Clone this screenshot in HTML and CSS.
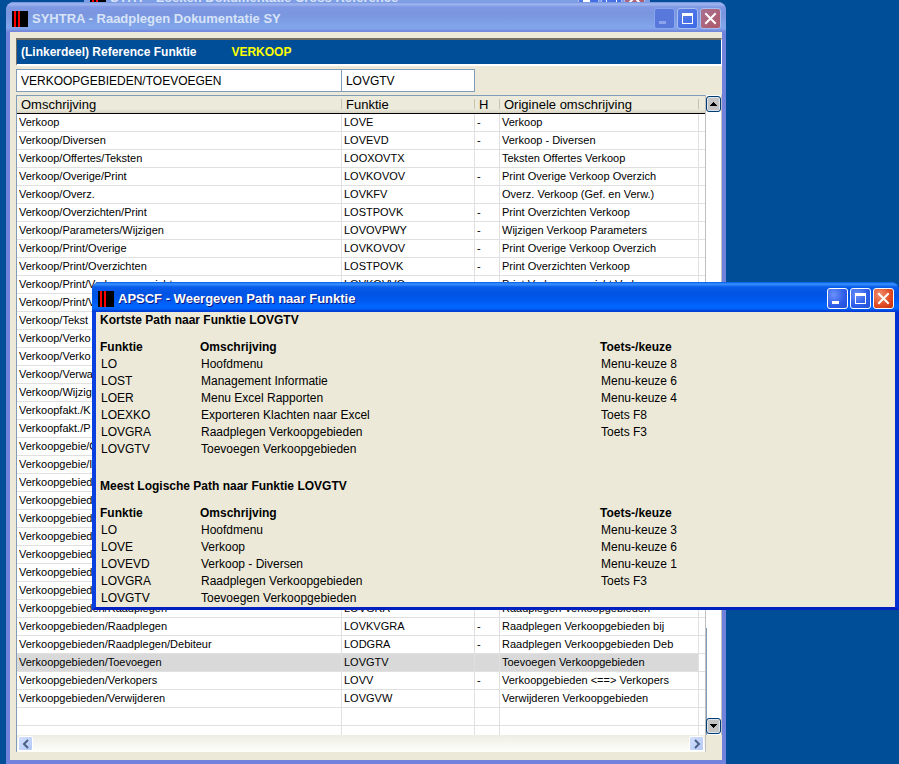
FILE: index.html
```html
<!DOCTYPE html>
<html lang="nl">
<head>
    <meta charset="UTF-8">
    <meta name="viewport" content="width=device-width, initial-scale=1.0">
    <title>SYHTRA - Raadplegen Dokumentatie SY</title>
    <link rel="stylesheet" href="styles.css">
</head>
<body>
<svg class="symbols" aria-hidden="true">
    <symbol id="app" viewBox="0 0 16 16"><path d="M0 0h16v16H0z"/><path d="M2 0h2v16H2zM6 0h2v16H6z" fill="#f00"/></symbol>
    <symbol id="min" viewBox="0 0 19 19"><path d="M4 12h7v3H4z"/></symbol>
    <symbol id="max" viewBox="0 0 19 19"><path d="M4 4h11v11H4zM5 7v7h9V7z" fill-rule="evenodd"/></symbol>
    <symbol id="close" viewBox="0 0 19 19"><path d="M5 5l9 9M14 5l-9 9" stroke="currentColor" stroke-width="2" stroke-linecap="square"/></symbol>
    <symbol id="up" viewBox="0 0 7 4"><path d="M3 0h1v1h1v1h1v1h1v1H0V3h1V2h1V1h1z"/></symbol>
    <symbol id="down" viewBox="0 0 7 4"><path d="M0 0h7v1H6v1H5v1H4v1H3V3H2V2H1V1H0z"/></symbol>
    <symbol id="left" viewBox="0 0 8 10"><path d="M6 1L2 5l4 4" fill="none" stroke="currentColor" stroke-width="2"/></symbol>
    <symbol id="right" viewBox="0 0 8 10"><path d="M2 1l4 4-4 4" fill="none" stroke="currentColor" stroke-width="2"/></symbol>
</svg>
<div class="desktop">
    <section class="window inactive back">
        <header class="titlebar">
            <svg class="app"><use href="#app"/></svg>
            <h2>SYHT - Zoeken Dokumentatie Cross Reference</h2>
            <button class="cap" aria-label="Minimaliseren"><svg><use href="#min"/></svg></button>
            <button class="cap" aria-label="Maximaliseren"><svg><use href="#max"/></svg></button>
            <button class="cap close" aria-label="Sluiten"><svg><use href="#close"/></svg></button>
        </header>
    </section>

    <main class="window inactive main">
        <header class="titlebar">
            <svg class="app"><use href="#app"/></svg>
            <h1>SYHTRA - Raadplegen Dokumentatie SY</h1>
            <button class="cap dim" aria-label="Minimaliseren"><svg><use href="#min"/></svg></button>
            <button class="cap" aria-label="Maximaliseren"><svg><use href="#max"/></svg></button>
            <button class="cap close" aria-label="Sluiten"><svg><use href="#close"/></svg></button>
        </header>
        <div class="content">
            <div class="banner"><span>(Linkerdeel) Reference Funktie</span><span class="key">VERKOOP</span></div>
            <form class="fields">
                <input class="desc" type="text" aria-label="Omschrijving" value="VERKOOPGEBIEDEN/TOEVOEGEN">
                <input class="func" type="text" aria-label="Funktie" value="LOVGTV">
            </form>
            <div class="grid">
                <div class="list">
                    <table class="rows">
                        <colgroup><col><col class="c-func"><col class="c-h"><col class="c-orig"><col class="c-end"></colgroup>
                        <thead>
                            <tr><th>Omschrijving</th><th>Funktie</th><th>H</th><th>Originele omschrijving</th><th></th></tr>
                        </thead>
                        <tbody>
                            <tr><td>Verkoop</td><td>LOVE</td><td>-</td><td>Verkoop</td><td></td></tr>
                            <tr><td>Verkoop/Diversen</td><td>LOVEVD</td><td>-</td><td>Verkoop - Diversen</td><td></td></tr>
                            <tr><td>Verkoop/Offertes/Teksten</td><td>LOOXOVTX</td><td></td><td>Teksten Offertes Verkoop</td><td></td></tr>
                            <tr><td>Verkoop/Overige/Print</td><td>LOVKOVOV</td><td>-</td><td>Print Overige Verkoop Overzich</td><td></td></tr>
                            <tr><td>Verkoop/Overz.</td><td>LOVKFV</td><td></td><td>Overz. Verkoop (Gef. en Verw.)</td><td></td></tr>
                            <tr><td>Verkoop/Overzichten/Print</td><td>LOSTPOVK</td><td>-</td><td>Print Overzichten Verkoop</td><td></td></tr>
                            <tr><td>Verkoop/Parameters/Wijzigen</td><td>LOVOVPWY</td><td>-</td><td>Wijzigen Verkoop Parameters</td><td></td></tr>
                            <tr><td>Verkoop/Print/Overige</td><td>LOVKOVOV</td><td>-</td><td>Print Overige Verkoop Overzich</td><td></td></tr>
                            <tr><td>Verkoop/Print/Overzichten</td><td>LOSTPOVK</td><td>-</td><td>Print Overzichten Verkoop</td><td></td></tr>
                            <tr><td>Verkoop/Print/Verkoopoverzicht</td><td>LOVKOVVO</td><td></td><td>Print Verkoopoverzicht Verk.</td><td></td></tr>
                            <tr><td>Verkoop/Print/V</td><td></td><td></td><td></td><td></td></tr>
                            <tr><td>Verkoop/Tekst</td><td></td><td></td><td></td><td></td></tr>
                            <tr><td>Verkoop/Verko</td><td></td><td></td><td></td><td></td></tr>
                            <tr><td>Verkoop/Verko</td><td></td><td></td><td></td><td></td></tr>
                            <tr><td>Verkoop/Verwa</td><td></td><td></td><td></td><td></td></tr>
                            <tr><td>Verkoop/Wijzig</td><td></td><td></td><td></td><td></td></tr>
                            <tr><td>Verkoopfakt./K</td><td></td><td></td><td></td><td></td></tr>
                            <tr><td>Verkoopfakt./P</td><td></td><td></td><td></td><td></td></tr>
                            <tr><td>Verkoopgebie/G</td><td></td><td></td><td></td><td></td></tr>
                            <tr><td>Verkoopgebie/I</td><td></td><td></td><td></td><td></td></tr>
                            <tr><td>Verkoopgebied</td><td></td><td></td><td></td><td></td></tr>
                            <tr><td>Verkoopgebied</td><td></td><td></td><td></td><td></td></tr>
                            <tr><td>Verkoopgebied</td><td></td><td></td><td></td><td></td></tr>
                            <tr><td>Verkoopgebied</td><td></td><td></td><td></td><td></td></tr>
                            <tr><td>Verkoopgebied</td><td></td><td></td><td></td><td></td></tr>
                            <tr><td>Verkoopgebied</td><td></td><td></td><td></td><td></td></tr>
                            <tr><td>Verkoopgebied</td><td></td><td></td><td></td><td></td></tr>
                            <tr><td>Verkoopgebieden/Raadplegen</td><td>LOVGRA</td><td></td><td>Raadplegen Verkoopgebieden</td><td></td></tr>
                            <tr><td>Verkoopgebieden/Raadplegen</td><td>LOVKVGRA</td><td>-</td><td>Raadplegen Verkoopgebieden bij</td><td></td></tr>
                            <tr><td>Verkoopgebieden/Raadplegen/Debiteur</td><td>LODGRA</td><td>-</td><td>Raadplegen Verkoopgebieden Deb</td><td></td></tr>
                            <tr class="selected"><td>Verkoopgebieden/Toevoegen</td><td>LOVGTV</td><td></td><td>Toevoegen Verkoopgebieden</td><td></td></tr>
                            <tr><td>Verkoopgebieden/Verkopers</td><td>LOVV</td><td>-</td><td>Verkoopgebieden &lt;==&gt; Verkopers</td><td></td></tr>
                            <tr><td>Verkoopgebieden/Verwijderen</td><td>LOVGVW</td><td></td><td>Verwijderen Verkoopgebieden</td><td></td></tr>
                            <tr><td></td><td></td><td></td><td></td><td></td></tr>
                            <tr class="part"><td></td><td></td><td></td><td></td><td></td></tr>
                        </tbody>
                    </table>
                    <div class="hscroll">
                        <button aria-label="Naar links"><svg><use href="#left"/></svg></button>
                        <button aria-label="Naar rechts"><svg><use href="#right"/></svg></button>
                    </div>
                </div>
                <div class="vscroll">
                    <button aria-label="Omhoog"><svg><use href="#up"/></svg></button>
                    <button aria-label="Omlaag"><svg><use href="#down"/></svg></button>
                </div>
            </div>
        </div>
    </main>

    <section class="window popup">
        <header class="titlebar">
            <svg class="app"><use href="#app"/></svg>
            <h2>APSCF - Weergeven Path naar Funktie</h2>
            <button class="cap" aria-label="Minimaliseren"><svg><use href="#min"/></svg></button>
            <button class="cap" aria-label="Maximaliseren"><svg><use href="#max"/></svg></button>
            <button class="cap close" aria-label="Sluiten"><svg><use href="#close"/></svg></button>
        </header>
        <div class="paths">
            <h3>Kortste Path naar Funktie LOVGTV</h3>
            <table>
                <colgroup><col class="p-func"><col class="p-desc"><col></colgroup>
                <thead><tr><th>Funktie</th><th>Omschrijving</th><th>Toets-/keuze</th></tr></thead>
                <tbody>
                    <tr><td>LO</td><td>Hoofdmenu</td><td>Menu-keuze 8</td></tr>
                    <tr><td>LOST</td><td>Management Informatie</td><td>Menu-keuze 6</td></tr>
                    <tr><td>LOER</td><td>Menu Excel Rapporten</td><td>Menu-keuze 4</td></tr>
                    <tr><td>LOEXKO</td><td>Exporteren Klachten naar Excel</td><td>Toets F8</td></tr>
                    <tr><td>LOVGRA</td><td>Raadplegen Verkoopgebieden</td><td>Toets F3</td></tr>
                    <tr><td>LOVGTV</td><td>Toevoegen Verkoopgebieden</td><td></td></tr>
                </tbody>
            </table>
            <h3>Meest Logische Path naar Funktie LOVGTV</h3>
            <table>
                <colgroup><col class="p-func"><col class="p-desc"><col></colgroup>
                <thead><tr><th>Funktie</th><th>Omschrijving</th><th>Toets-/keuze</th></tr></thead>
                <tbody>
                    <tr><td>LO</td><td>Hoofdmenu</td><td>Menu-keuze 3</td></tr>
                    <tr><td>LOVE</td><td>Verkoop</td><td>Menu-keuze 6</td></tr>
                    <tr><td>LOVEVD</td><td>Verkoop - Diversen</td><td>Menu-keuze 1</td></tr>
                    <tr><td>LOVGRA</td><td>Raadplegen Verkoopgebieden</td><td>Toets F3</td></tr>
                    <tr><td>LOVGTV</td><td>Toevoegen Verkoopgebieden</td><td></td></tr>
                </tbody>
            </table>
        </div>
    </section>
</div>
</body>
</html>
```
FILE: styles.css
```css
* {
    margin: 0;
    padding: 0;
    box-sizing: border-box;
}
body {
    font-family: "Liberation Sans", Arial, sans-serif;
    font-size: 12px;
    color: #000;
    background: #004e98;
    overflow: hidden;
}
.symbols {
    display: none;
}
.desktop {
    position: relative;
    min-height: 100vh;
    overflow: hidden;
}

/* windows */
.window {
    position: absolute;
    border: 4px solid #0831d9;
    border-top: 0;
    border-radius: 8px 8px 0 0;
    background: #ece9d8;
}
.window.inactive {
    border-color: #7182dc;
}
.back {
    top: -19px;
    left: 84px;
    right: 249px;
}
.main {
    top: 2px;
    left: 6px;
    right: 173px;
}
.popup {
    top: 282px;
    left: 92px;
    right: 0;
    border-color: #0a4ef0 #0030d0 #0020c0 #0a3fe0;
    border-bottom-width: 3px;
}
.titlebar {
    display: flex;
    align-items: center;
    gap: 2px;
    height: 30px;
    margin: 0 -4px;
    padding: 3px 5px 0 6px;
    border-radius: 8px 8px 0 0;
    color: #fff;
    background: linear-gradient(#0058e6 0, #3a93ff 2px, #0a5cea 5px, #0054e3 12px, #0058ee 18px, #0066ff 24px, #0062f6 27px, #003dd7 29px);
}
.inactive .titlebar {
    color: #d8e4f8;
    background: linear-gradient(#7090e0 0, #a0b8f0 2px, #8098e4 5px, #7a96df 12px, #7c9ce4 18px, #82a6ea 24px, #82a2ea 27px, #7488dc 29px);
}
.titlebar h1,
.titlebar h2 {
    flex: 1;
    padding-left: 2px;
    font-size: 13px;
    line-height: 16px;
    white-space: nowrap;
}
.popup h2 {
    text-shadow: 1px 1px #0a1883;
}
.app {
    width: 16px;
    height: 16px;
}
.cap {
    width: 21px;
    height: 21px;
    border: 1px solid #fff;
    border-radius: 3px;
    color: #fff;
    background: radial-gradient(circle at 30% 30%, #6a90f8, #2c5ce8 60%, #2050d0);
}
.cap svg {
    display: block;
    width: 19px;
    height: 19px;
    fill: currentColor;
}
.cap.close {
    background: radial-gradient(circle at 30% 30%, #f09070, #e04820 60%, #c03010);
}
.inactive .cap {
    border-color: #a8bcf0;
    background: linear-gradient(135deg, #5c80e4, #3c68e8);
}
.inactive .cap.dim {
    color: #8ca4ec;
    border-color: #88a4ec;
    background: #5878dc;
}
.inactive .cap.close {
    background: linear-gradient(135deg, #a87090, #b05868);
}

/* main window */
.content {
    display: flex;
    flex-direction: column;
    gap: 3px;
    padding: 6px 0 8px 6px;
}
.banner {
    display: flex;
    gap: 35px;
    height: 28px;
    padding: 0 4px;
    border: 1px solid #fff;
    border-top: 2px solid #716f64;
    border-left: 1px solid #716f64;
    border-bottom-width: 2px;
    color: #fff;
    background: #004e98;
    font-weight: bold;
    line-height: 24px;
}
.key {
    color: #ff0;
}
.fields {
    display: flex;
    width: 65%;
}
.fields input {
    height: 23px;
    padding: 0 4px;
    border: 1px solid #7f9db9;
    background: #fff;
    font: inherit;
}
.fields .desc {
    flex: 1;
    border-right: 0;
}
.func {
    width: 134px;
}
.grid {
    display: flex;
}
.list {
    flex: 1;
    border: 1px solid #7f9db9;
    border-width: 1px 1px 0 1px;
    border-right-color: #c0c0c0;
    background: #fff;
}
.rows {
    width: 100%;
    table-layout: fixed;
    border-collapse: separate;
    border-spacing: 0;
}
.c-func {
    width: 133px;
}
.c-h {
    width: 25px;
}
.c-orig {
    width: 199px;
}
.c-end {
    width: 6px;
}
.rows th {
    height: 18px;
    padding-left: 4px;
    border-bottom: 1px solid #000;
    background: linear-gradient(90deg, transparent calc(100% - 1px), #c7c5b2 0) 0 3px / 100% 10px no-repeat, linear-gradient(#ebeadb 13px, #d6d2c2);
    font-size: 13px;
    font-weight: normal;
    line-height: 16px;
    text-align: left;
    white-space: nowrap;
}
.rows th:last-child {
    background: linear-gradient(#ebeadb 13px, #d6d2c2);
}
.rows td {
    height: 18px;
    padding-left: 2px;
    border-right: 1px solid #e0e0e0;
    border-bottom: 1px solid #e0e0e0;
    font-size: 11px;
    line-height: 17px;
    white-space: nowrap;
}
.rows td:last-child {
    border-right: 0;
}
.selected td:not(:last-child) {
    background: #d9d9d9;
}
.rows .part td {
    height: 9px;
    border-bottom: 0;
}
.hscroll {
    display: flex;
    justify-content: space-between;
    align-items: center;
    height: 17px;
    padding: 0 1px;
    background: linear-gradient(#eeede5, #fefefb);
}
.hscroll button {
    display: grid;
    place-items: center;
    width: 15px;
    height: 15px;
    border: 1px solid #fff;
    border-radius: 2px;
    color: #4d6185;
    background: linear-gradient(135deg, #d2e0fe, #b4c8f6);
}
.hscroll svg {
    width: 8px;
    height: 10px;
}
.vscroll {
    display: flex;
    flex-direction: column;
    justify-content: space-between;
    align-items: center;
    width: 16px;
    margin-bottom: 17px;
    padding: 1px 0;
    border-right: 1px solid #c0c0c0;
    background: linear-gradient(#7f9db9, #7f9db9) left bottom / 1px 107px no-repeat, #fff;
}
.vscroll button {
    display: grid;
    place-items: center;
    width: 15px;
    height: 16px;
    border: 1px solid #003c74;
    border-radius: 3px;
    background: #c4c4c4;
    box-shadow: inset 0 0 0 1px #dce4ec;
}
.vscroll svg {
    width: 7px;
    height: 4px;
}

/* popup */
.paths {
    padding-left: 4px;
    line-height: 17px;
}
.paths h3 {
    margin-bottom: 10px;
    font-size: 12px;
}
.paths table {
    width: 100%;
    table-layout: fixed;
    border-collapse: collapse;
}
.paths table + h3 {
    margin-top: 20px;
}
.paths th {
    text-align: left;
}
.paths td {
    padding-left: 1px;
}
.p-func {
    width: 100px;
}
.p-desc {
    width: 400px;
}
```
